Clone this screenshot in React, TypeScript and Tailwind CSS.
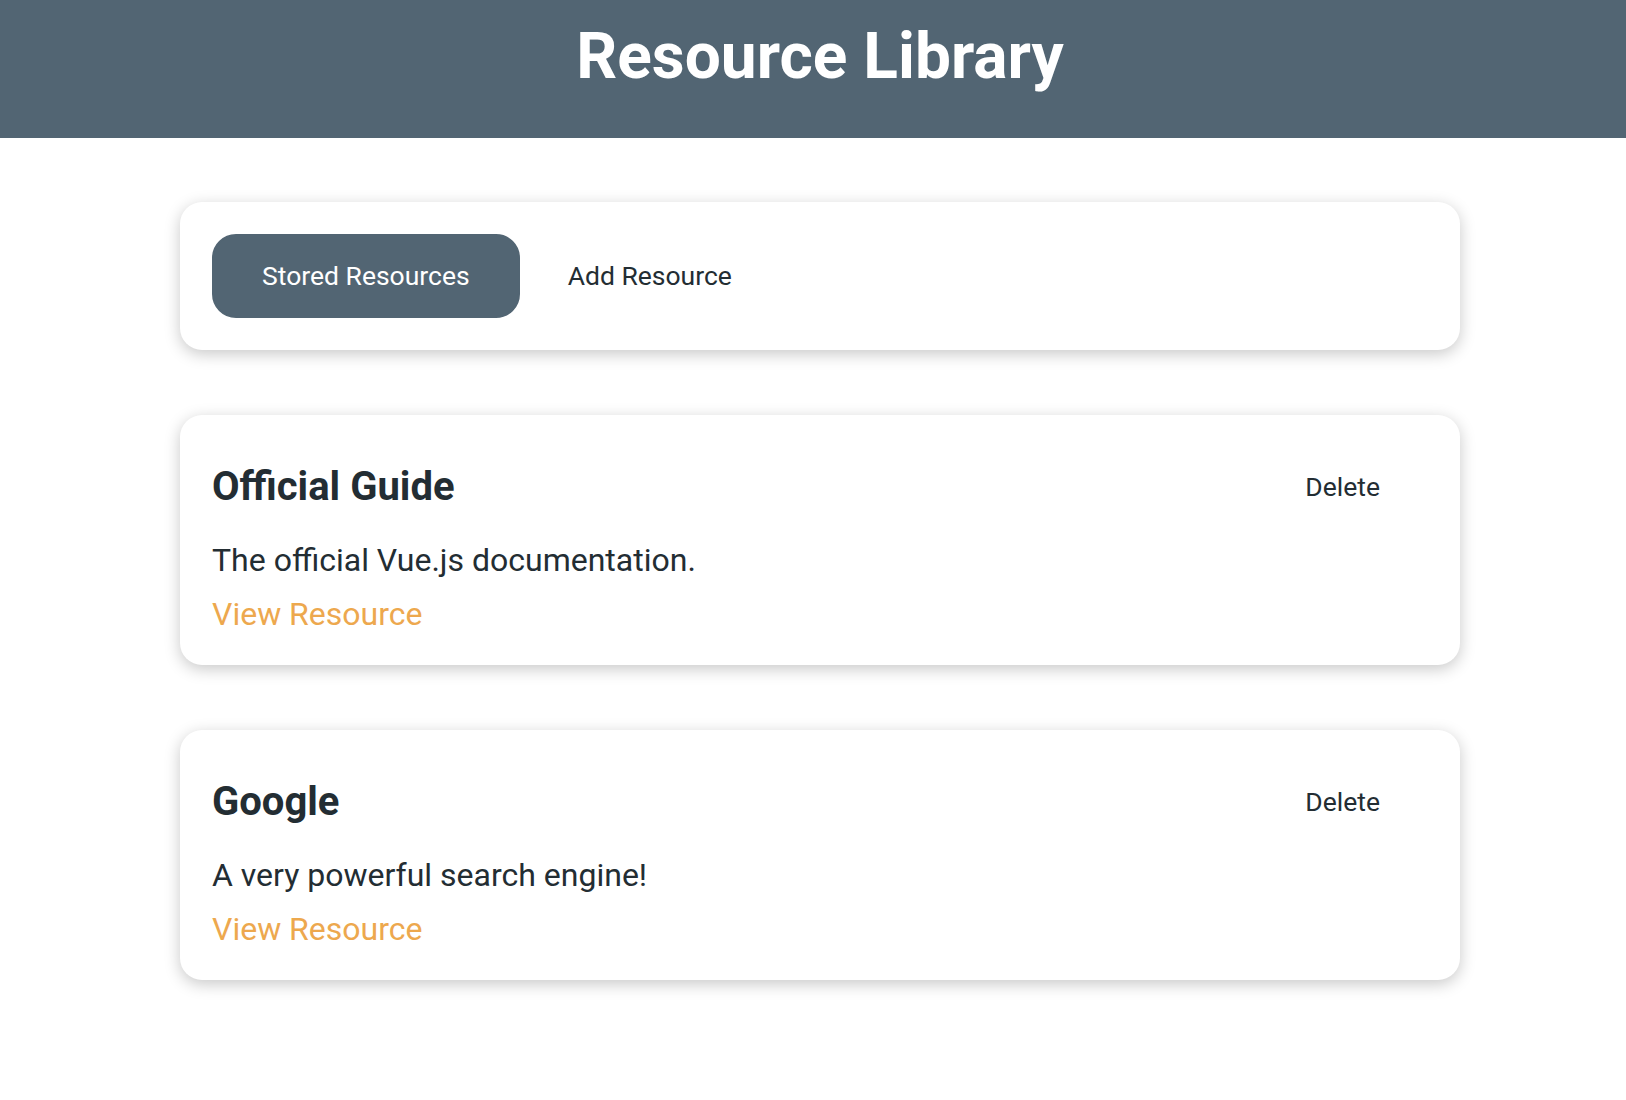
import React from 'react';

const resources = [
    { id: 'official-guide', title: 'Official Guide', description: 'The official Vue.js documentation.' },
    { id: 'google', title: 'Google', description: 'A very powerful search engine!' },
];

export default function App() {
    return (
        <div className="min-h-screen bg-white font-['Roboto',sans-serif] text-[#232d33]">
            {/* Header */}
            <header className="h-[138px] bg-[#526573] pl-[14px] pt-[25px] text-center">
                <h1 className="text-[64px] leading-none font-bold text-white">Resource Library</h1>
            </header>

            <main className="flex flex-col items-center pl-[14px] pt-[64px] pb-[64px] gap-[65px]">
                {/* Tabs */}
                <div className="w-[1280px] rounded-[22px] bg-white p-8 shadow-[0_4px_16px_rgba(0,0,0,0.22)]">
                    <div className="flex items-center">
                        <button className="rounded-[24px] border-2 border-[#526573] bg-[#526573] px-12 py-6 text-[26.5px] leading-[32px] text-white">
                            Stored Resources
                        </button>
                        <button className="px-12 py-6 text-[26.5px] leading-[32px] text-[#232d33]">Add Resource</button>
                    </div>
                </div>

                {/* Resource list */}
                {resources.map((res) => (
                    <div key={res.id} className="w-[1280px] rounded-[22px] bg-white px-8 pt-[34px] pb-[32px] shadow-[0_4px_16px_rgba(0,0,0,0.22)]">
                        <div className="flex items-center justify-between">
                            <h3 className="text-[40px] leading-[48px] font-bold">{res.title}</h3>
                            <button className="px-12 py-6 text-[26.5px] leading-[28px]">Delete</button>
                        </div>
                        <p className="mt-[16px] text-[32px] leading-[38px]">{res.description}</p>
                        <a href="#" className="mt-[16px] block text-[32px] leading-[38px] text-[#eda84e]">View Resource</a>
                    </div>
                ))}
            </main>
        </div>
    );
}
